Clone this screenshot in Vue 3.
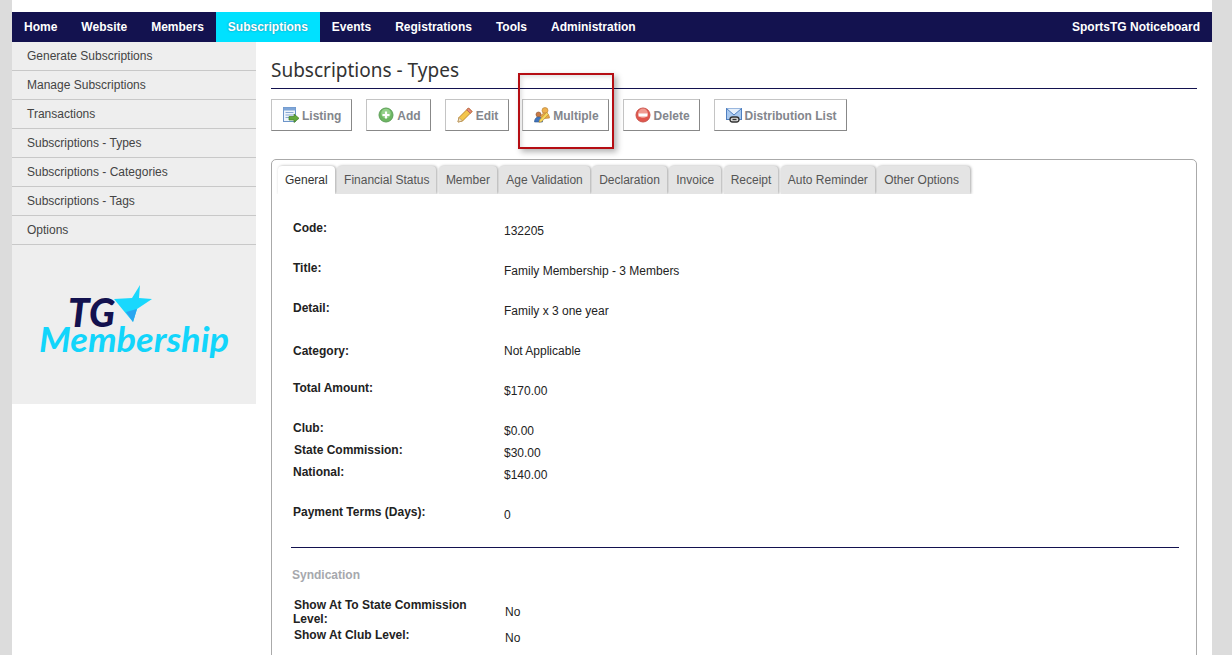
<script setup>
const navItems = [
  { label: 'Home' }, { label: 'Website' }, { label: 'Members' },
  { label: 'Subscriptions', active: true }, { label: 'Events' },
  { label: 'Registrations' }, { label: 'Tools' }, { label: 'Administration' }
]
const sideItems = ['Generate Subscriptions', 'Manage Subscriptions', 'Transactions', 'Subscriptions - Types', 'Subscriptions - Categories', 'Subscriptions - Tags', 'Options']
const actions = [
  { label: 'Listing', icon: 'listing' }, { label: 'Add', icon: 'add' }, { label: 'Edit', icon: 'edit' },
  { label: 'Multiple', icon: 'multiple' }, { label: 'Delete', icon: 'delete' }, { label: 'Distribution List', icon: 'dist' }
]
const tabs = ['General', 'Financial Status', 'Member', 'Age Validation', 'Declaration', 'Invoice', 'Receipt', 'Auto Reminder', 'Other Options']
const rows = [
  { label: 'Code:', value: '132205' },
  { label: 'Title:', value: 'Family Membership - 3 Members' },
  { label: 'Detail:', value: 'Family x 3 one year' },
  { label: 'Category:', value: 'Not Applicable', low: true },
  { label: 'Total Amount:', value: '$170.00' },
  { label: 'Club:', value: '$0.00', tight: true },
  { label: 'State Commission:', value: '$30.00', tight: true, nudge: true },
  { label: 'National:', value: '$140.00' },
  { label: 'Payment Terms (Days):', value: '0', last: true }
]
</script>

<template>
  <div class="page">
    <nav class="topnav">
      <a v-for="n in navItems" :key="n.label" class="navlink" :class="{ active: n.active }">{{ n.label }}</a>
      <a class="navlink right">SportsTG Noticeboard</a>
    </nav>
    <div class="body">
      <aside class="side">
        <a v-for="s in sideItems" :key="s" class="sideitem">{{ s }}</a>
        <div class="logo">
          <svg width="200" height="84" viewBox="0 0 200 84">
            <text x="28" y="43" class="lg-tg" textLength="47" lengthAdjust="spacingAndGlyphs">TG</text>
            <polygon points="74,15 92,14 100,1 99,14 112,15 97,25 93,38 83,26" fill="#19d8fd" />
            <polygon points="86,28 97,25 93,38" fill="#2aa5f0" />
            <text x="-1" y="68" class="lg-m" textLength="190" lengthAdjust="spacingAndGlyphs">Membership</text>
          </svg>
        </div>
      </aside>
      <main class="main">
        <h1 class="title">Subscriptions - Types</h1>
        <div class="actions">
          <a v-for="a in actions" :key="a.label" class="btn">
            <svg class="ico" width="16" height="16" viewBox="0 0 16 16">
              <g v-if="a.icon === 'listing'">
                <rect x=".5" y=".5" width="12" height="14" fill="#eef4fb" stroke="#6d95c9" />
                <rect x=".5" y=".5" width="12" height="3" fill="#7fa6d8" />
                <path d="M2.500 5.500h8M2.500 8h8M2.500 10.500h4" stroke="#88a8d2" fill="none" />
                <path d="M6 9.500h5V7l5 4.300-5 4.200v-2.500H6z" fill="#63a83c" stroke="#3f7f24" stroke-width=".7" />
              </g>
              <g v-else-if="a.icon === 'add'">
                <circle cx="8" cy="8" r="7" fill="#6db662" stroke="#5d9f58" />
                <circle cx="8" cy="6.500" r="4.800" fill="#94d08a" />
                <path d="M8 4.500v7M4.500 8h7" stroke="#fff" stroke-width="2.200" />
              </g>
              <g v-else-if="a.icon === 'edit'">
                <path d="M1 15l1-4.500L11.500 1l3.500 3.500L5.500 14z" fill="#f4c64c" stroke="#c08a2a" />
                <path d="M11.500 1l3.500 3.500-1.800 1.800-3.500-3.500z" fill="#e98a7a" stroke="#b9674f" />
                <path d="M1 15l1-4.500L5.500 14z" fill="#f2e2c2" stroke="#a98a5a" stroke-width=".6" />
              </g>
              <g v-else-if="a.icon === 'multiple'">
                <circle cx="11" cy="3.500" r="3" fill="#eeb04e" stroke="#b37d33" stroke-width=".6" />
                <path d="M6.500 12c0-4 2-6 4.500-6s4.500 2 4.500 5z" fill="#e9a94a" stroke="#b37d33" stroke-width=".6" />
                <circle cx="4.500" cy="7.500" r="2.500" fill="#c97a45" stroke="#8a5230" stroke-width=".6" />
                <path d="M.5 15c0-3 1.500-5 4-5s4 2 4 5z" fill="#3f75c0" stroke="#2b5288" stroke-width=".6" />
                <path d="M5.500 13L12.500 5.500l2 1.800-7 7.500-2.500.5z" fill="#f7d85e" stroke="#b58a2d" stroke-width=".6" />
              </g>
              <g v-else-if="a.icon === 'delete'">
                <circle cx="8" cy="8" r="7" fill="#e0564c" stroke="#c9544c" />
                <circle cx="8" cy="6.300" r="4.800" fill="#f09a90" />
                <rect x="3.500" y="6.500" width="9" height="3" fill="#fff" />
              </g>
              <g v-else>
                <rect x=".5" y="1.500" width="15" height="11" fill="#a9c9ef" stroke="#4f7fc0" />
                <path d="M.5 1.500L8 8l7.500-6.500" fill="#e6f0fb" stroke="#4f7fc0" />
                <rect x="4" y="10" width="9" height="5" rx="2.500" fill="#d8d8d8" stroke="#333" stroke-width="1.300" />
                <path d="M6.500 12.500h4" stroke="#333" stroke-width="1.300" />
              </g>
            </svg>
            <span class="btxt">{{ a.label }}</span>
          </a>
        </div>
        <section class="card">
          <div class="tabs">
            <a v-for="(t, i) in tabs" :key="t" class="tab" :class="{ on: i === 0 }">{{ t }}</a>
          </div>
          <div class="panel">
            <div class="rows">
              <div v-for="r in rows" :key="r.label" class="row" :class="{ tight: r.tight, last: r.last }">
                <div class="lab" :class="{ low: r.low, nudge: r.nudge }">{{ r.label }}</div>
                <div class="val">{{ r.value }}</div>
              </div>
            </div>
            <hr class="rule" />
            <h3 class="sub">Syndication</h3>
            <div class="row2 first">
              <div class="lab2">Show At To State Commission<br /><span class="lv">Level:</span></div>
              <div class="val2">No</div>
            </div>
            <div class="row2">
              <div class="lab2">Show At Club Level:</div>
              <div class="val2 down">No</div>
            </div>
          </div>
        </section>
        <div class="callout"></div>
      </main>
    </div>
  </div>
</template>

<style>
html, body { margin: 0; height: 100%; overflow: hidden; background: #dcdcdc; }
</style>

<style scoped>
.page {
  width: 1200px;
  height: 655px;
  margin-left: 12px;
  padding-top: 12px;
  box-sizing: border-box;
  background: #fff;
  overflow: hidden;
  font-family: "Liberation Sans", Arial, sans-serif;
  font-size: 12px;
}
.topnav {
  display: flex;
  height: 30px;
  background: #13124f;
}
.navlink {
  padding: 0 12px;
  line-height: 30px;
  color: #fff;
  font-weight: 700;
}
.navlink.active {
  background: #00e1ff;
  text-shadow: 0 0 2px rgba(40, 60, 90, .55);
}
.navlink.right { margin-left: auto; }
.body { display: flex; }
.side {
  width: 244px;
  height: 362px;
  flex: none;
  background: #eeeeee;
}
.sideitem {
  display: block;
  height: 28px;
  padding-left: 15px;
  line-height: 29px;
  color: #444;
  border-bottom: 1px solid #c8c8c8;
}
.logo { padding: 39px 0 0 28px; }
.lg-tg {
  font: italic 900 40px "Lato", "Liberation Sans", sans-serif;
  fill: #13124f;
}
.lg-m {
  font: italic 700 35px "Lato", "Liberation Sans", sans-serif;
  fill: #12d5fb;
}
.main {
  position: relative;
  width: 926px;
  margin-left: 15px;
}
.title {
  margin: 0;
  height: 47px;
  box-sizing: border-box;
  border-bottom: 1px solid #13124f;
  padding-top: 14px;
  font: 400 19px/28px "Noto Sans", "Open Sans", sans-serif;
  color: #333;
}
.actions {
  display: flex;
  gap: 13.3px;
  margin-top: 10px;
}
.btn {
  display: flex;
  align-items: center;
  gap: 3px;
  height: 32px;
  box-sizing: border-box;
  padding: 0 9.7px 0 11px;
  border: 1px solid #c4c4c4;
  border-right-color: #888;
  border-bottom-color: #888;
  color: #83868c;
  font-weight: 700;
}
.btn:first-child { margin-right: 1px; }
.btxt { padding-top: 1px; }
.ico { flex: none; }
.card {
  margin-top: 28px;
  height: 520px;
  box-sizing: border-box;
  border: 1px solid #aaa;
  border-radius: 5px;
}
.tabs {
  display: flex;
  gap: 2.4px;
  height: 34px;
  box-sizing: border-box;
  padding: 6px 0 0 6px;
  overflow: hidden;
  border-radius: 4px 4px 0 0;
}
.tab {
  padding: 0 7px;
  line-height: 28px;
  background: #e4e4e4;
  color: #555;
  border-radius: 4px 4px 0 0;
  box-shadow: 1px 0 3px rgba(0, 0, 0, .35);
}
.tab:last-child { padding-right: 11px; }
.tab.on {
  background: #fff;
  color: #333;
}
.panel { padding: 0 17px 0 6px; }
.rows { margin-top: 23px; padding-left: 15px; }
.row {
  display: flex;
  height: 22px;
  margin-bottom: 18px;
  line-height: 22px;
}
.row.tight { margin-bottom: 0; }
.row.last { margin-bottom: 0; }
.lab {
  width: 211px;
  flex: none;
  font-weight: 700;
  color: #222;
}
.lab.low { padding-top: 3px; }
.lab.nudge { padding-left: 1px; width: 210px; }
.val { padding-top: 3px; color: #222; }
.rule {
  margin: 24px 0 0 13px;
  border: 0;
  height: 1px;
  background: #13124f;
}
.sub {
  margin: 16px 0 0 14px;
  font-size: 12px;
  line-height: 22px;
  color: #a6a8ad;
}
.row2 { display: flex; margin-left: 16px; line-height: 14px; margin-top: 2px; }
.row2.first { margin-top: 12px; height: 28px; }
.lab2 {
  width: 211px;
  flex: none;
  font-weight: 700;
  color: #222;
}
.lv { margin-left: -1px; }
.val2 { color: #222; padding-top: 7px; }
.val2.down { padding-top: 3px; }
.callout {
  position: absolute;
  left: 247px;
  top: 31px;
  width: 96px;
  height: 76px;
  box-sizing: border-box;
  border: 2px solid #b50d13;
  box-shadow: 3px 3px 6px rgba(0, 0, 0, .3), inset 2px 2px 4px rgba(0, 0, 0, .12);
}
</style>
